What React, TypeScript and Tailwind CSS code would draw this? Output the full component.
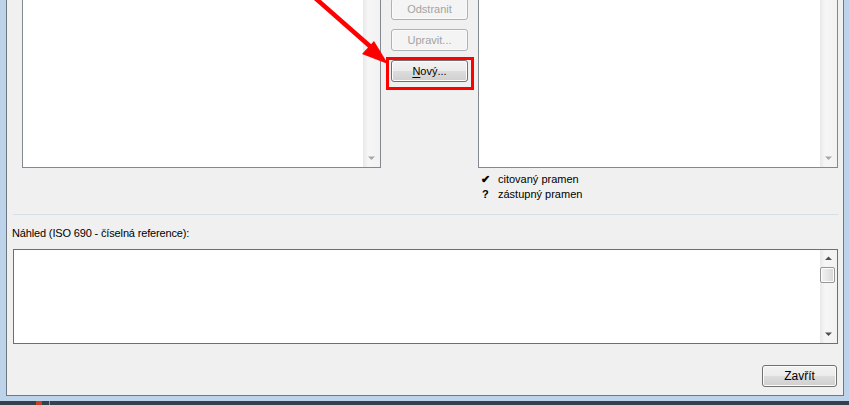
import React from "react";

function WinButton({
  children,
  disabled,
  className = "",
}: {
  children: React.ReactNode;
  disabled?: boolean;
  className?: string;
}) {
  return (
    <div
      className={
        "flex h-[22px] items-center justify-center rounded-[3px] border leading-none " +
        (disabled
          ? "border-[#adb2b5] bg-[#f4f4f4] text-[#a3a3a3] shadow-[inset_0_0_0_1px_#fafafa] "
          : "border-[#707070] bg-[linear-gradient(#f2f2f2_0%,#ebebeb_50%,#dddddd_50%,#cfcfcf_100%)] text-black shadow-[inset_0_0_0_1px_#fcfcfc] ") +
        className
      }
    >
      {children}
    </div>
  );
}

function Tri({ up, dark }: { up?: boolean; dark?: boolean }) {
  return (
    <svg width="7" height="5" viewBox="0 0 7 5" className="block">
      {up ? (
        <polygon points="0,4 7,4 3.5,0.5" fill={dark ? "#505050" : "#a8a8a8"} />
      ) : (
        <polygon points="0,0.5 7,0.5 3.5,4" fill={dark ? "#505050" : "#a8a8a8"} />
      )}
    </svg>
  );
}

function ListBox({ width }: { width: string }) {
  return (
    <div className={"flex h-[168px] border-x border-b border-[#828790] bg-white " + width}>
      <div className="flex-1" />
      <div className="flex w-[17px] flex-col justify-end bg-[linear-gradient(90deg,#e8e8e8,#f6f6f6_30%,#f2f2f2)]">
        <div className="flex h-[17px] items-center justify-center">
          <Tri />
        </div>
      </div>
    </div>
  );
}

export default function App() {
  return (
    <div className="relative h-[405px] w-[849px] overflow-hidden bg-[#34404c] font-['Liberation_Sans',Arial,sans-serif] text-[11px] text-black">
      {/* window frame */}
      <div className="h-[401px] bg-[#bcd3ea] pb-[5px] pl-[6px] pr-[5px]">
        <div className="h-[396px] border-x border-b border-[#6e7883] bg-[#f0f0f0]">
          {/* top row */}
          <div className="flex pl-[15px]">
            <ListBox width="w-[359px]" />
            <div className="flex w-[97px] flex-col gap-[9px] pl-[10px] pt-0 -mt-[2px]">
              <WinButton disabled className="w-[77px]">
                Odstranit
              </WinButton>
              <WinButton disabled className="w-[77px]">
                Upravit...
              </WinButton>
              <WinButton className="w-[77px]">
                <span>
                  <span className="underline underline-offset-2">N</span>ový...
                </span>
              </WinButton>
            </div>
            <div className="flex flex-col">
              <ListBox width="w-[360px]" />
              <div className="mt-[4px] flex flex-col pl-[3px] leading-[15px]">
                <div className="flex h-[15px] items-center">
                  <span className="w-[17px] text-[11px] font-bold">✔</span>
                  <span>citovaný pramen</span>
                </div>
                <div className="flex h-[15px] items-center">
                  <span className="w-[17px] pl-[1px] font-bold">?</span>
                  <span>zástupný pramen</span>
                </div>
              </div>
            </div>
          </div>

          {/* separator */}
          <div className="ml-[6px] mt-[12px] h-px w-[825px] bg-[#d5dfe5]" />

          {/* preview */}
          <div className="ml-[5px] mt-[11px] h-[15px] leading-[15px] tracking-[-0.15px]">
            Náhled (ISO 690 - číselná reference):
          </div>
          <div className="ml-[6px] mt-[8px] flex h-[95px] w-[825px] border border-[#6e6e6e] bg-white">
            <div className="flex-1" />
            <div className="flex w-[17px] flex-col bg-[linear-gradient(90deg,#e8e8e8,#f6f6f6_30%,#f2f2f2)]">
              <div className="flex h-[17px] items-center justify-center">
                <Tri up dark />
              </div>
              <div className="h-[16px] w-[15px] rounded-[2px] border border-[#979797] bg-[linear-gradient(90deg,#f3f3f3,#e6e6e6_50%,#d6d6d6)] shadow-[inset_0_0_0_1px_#fbfbfb]" />
              <div className="flex-1" />
              <div className="flex h-[17px] items-center justify-center">
                <Tri dark />
              </div>
            </div>
          </div>

          {/* bottom button */}
          <div className="mt-[21px] flex justify-end pr-[6px]">
            <WinButton className="w-[75px] text-[12px]">Zavřít</WinButton>
          </div>
        </div>
      </div>

      {/* taskbar bits */}
      <div className="absolute bottom-0 left-[36px] h-[4px] w-[6px] bg-[#c8401f]" />
      <div className="absolute bottom-0 left-[49px] h-[4px] w-px bg-[#8a98a8]" />

      {/* annotation: red box */}
      <div className="pointer-events-none absolute left-[386px] top-[57px] h-[33px] w-[88px] border-[3px] border-[#ff0000]" />
      {/* annotation: arrow */}
      <svg
        className="pointer-events-none absolute left-0 top-0"
        width="849"
        height="405"
        viewBox="0 0 849 405"
      >
        <line x1="314" y1="-3" x2="372" y2="48" stroke="#ff0000" strokeWidth="4.5" />
        <polygon points="388,64 362,54 374,41" fill="#ff0000" />
      </svg>
    </div>
  );
}
